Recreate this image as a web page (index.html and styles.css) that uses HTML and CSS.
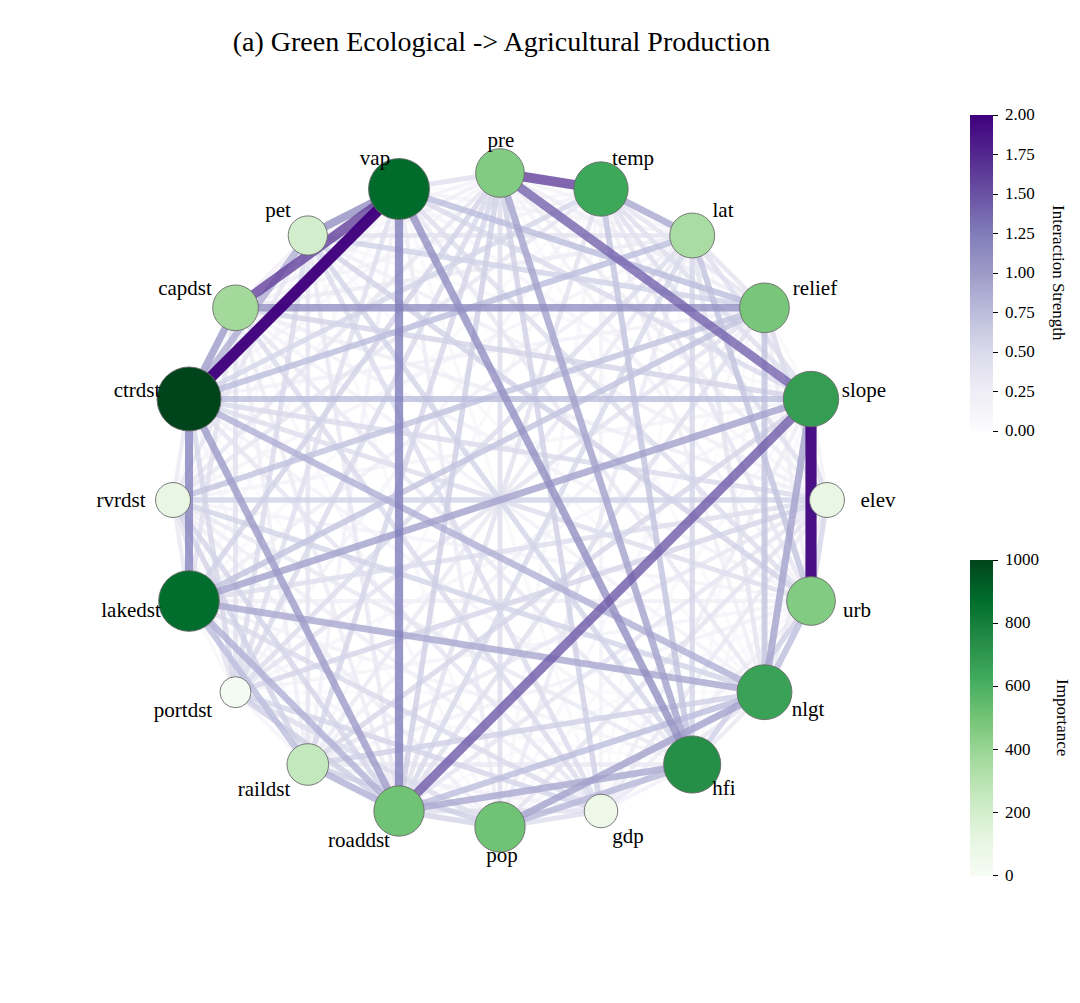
FILE: index.html
```html
<!DOCTYPE html>
<html lang="en">
<head>
<meta charset="utf-8">
<title>Green Ecological -> Agricultural Production</title>
<link rel="stylesheet" href="styles.css">
</head>
<body>
<div class="figure">
  <h1 class="title">(a) Green Ecological -&gt; Agricultural Production</h1>
  <div class="content">
    <svg id="graph" class="graph" width="940" height="945" viewBox="0 58 940 945" xmlns="http://www.w3.org/2000/svg">
      <g id="edges" class="edges"></g>
      <g id="nodes" class="nodes"></g>
      <g id="labels" class="labels"></g>
    </svg>
    <div class="cbars">
      <div class="cbar">
        <div class="bar purples"></div>
        <div class="ticks">
          <div class="tick">2.00</div>
          <div class="tick">1.75</div>
          <div class="tick">1.50</div>
          <div class="tick">1.25</div>
          <div class="tick">1.00</div>
          <div class="tick">0.75</div>
          <div class="tick">0.50</div>
          <div class="tick">0.25</div>
          <div class="tick">0.00</div>
        </div>
        <div class="cb-label">Interaction Strength</div>
      </div>
      <div class="cbar">
        <div class="bar greens"></div>
        <div class="ticks">
          <div class="tick">1000</div>
          <div class="tick">800</div>
          <div class="tick">600</div>
          <div class="tick">400</div>
          <div class="tick">200</div>
          <div class="tick">0</div>
        </div>
        <div class="cb-label">Importance</div>
      </div>
    </div>
  </div>
</div>
<script src="script.js"></script>
</body>
</html>
```

FILE: styles.css
```css
html, body {
  margin: 0;
  padding: 0;
  background: #ffffff;
}

.figure {
  width: 1080px;
  height: 1003px;
  background: #ffffff;
  font-family: "Liberation Serif", "Times New Roman", serif;
  color: #000000;
  overflow: hidden;
}

.title {
  margin: 0;
  width: 1003px;
  padding-top: 25px;
  height: 33px;
  line-height: 34px;
  font-size: 28px;
  font-weight: normal;
  text-align: center;
}

.content {
  display: flex;
}

.graph {
  display: block;
  flex: none;
}

.node-label {
  font-family: "Liberation Serif", "Times New Roman", serif;
  font-size: 21px;
  fill: #000000;
}

.node-circle {
  stroke: #6b6b6b;
  stroke-width: 0.9;
}

.edge {
  stroke-linecap: butt;
}

.cbars {
  display: flex;
  flex-direction: column;
  padding-top: 47px;
  gap: 109px;
}

.cbar {
  display: flex;
  align-items: center;
}

.bar {
  flex: none;
  width: 23px;
  height: 316px;
  margin-left: 30px;
}

.purples {
  background: linear-gradient(to top, #fcfbfd 0%, #efedf5 12.5%, #dadaeb 25%, #bcbddc 37.5%, #9e9ac8 50%, #807dba 62.5%, #6a51a3 75%, #54278f 87.5%, #3f007d 100%);
}

.greens {
  background: linear-gradient(to top, #f7fcf5 0%, #e5f5e0 12.5%, #c7e9c0 25%, #a1d99b 37.5%, #74c476 50%, #41ab5d 62.5%, #238b45 75%, #006d2c 87.5%, #00441b 100%);
}

.ticks {
  display: flex;
  flex-direction: column;
  justify-content: space-between;
  height: 336px;
  font-size: 17px;
}

.tick {
  display: flex;
  align-items: center;
  height: 20px;
  line-height: 20px;
}

.tick::before {
  content: "";
  width: 5px;
  height: 1px;
  background: #000000;
  margin-right: 7px;
}

.cb-label {
  writing-mode: vertical-rl;
  font-size: 17px;
  margin-left: 13px;
}
```

FILE: script.js
```js
(function () {
  var NS = "http://www.w3.org/2000/svg";
  var names = ["pre","temp","lat","relief","slope","elev","urb","nlgt","hfi","gdp","pop","roaddst","raildst","portdst","lakedst","rvrdst","ctrdst","capdst","pet","vap"];
  var imp = [0.46,0.64,0.35,0.49,0.68,0.10,0.46,0.66,0.74,0.07,0.51,0.51,0.26,0.02,0.87,0.10,1.00,0.37,0.20,0.88];
  var labels = [[501,147],[633,165],[723,217],[815,295],[864,397],[878,507],[857,617],[808,716],[724,795],[628,843],[502,862],[359,847],[264,796],[183,717],[131,617],[121,507],[137,397],[185,295],[278,217],[375,165]];
  var cx = 500, cy = 500, R = 327;

  var purples = ["#fcfbfd","#efedf5","#dadaeb","#bcbddc","#9e9ac8","#807dba","#6a51a3","#54278f","#3f007d"];
  var greens = ["#f7fcf5","#e5f5e0","#c7e9c0","#a1d99b","#74c476","#41ab5d","#238b45","#006d2c","#00441b"];

  function hex(h) { return [parseInt(h.substr(1,2),16), parseInt(h.substr(3,2),16), parseInt(h.substr(5,2),16)]; }
  function cmap(stops, t) {
    t = Math.max(0, Math.min(1, t));
    var p = t * (stops.length - 1);
    var i = Math.min(Math.floor(p), stops.length - 2);
    var f = p - i;
    var a = hex(stops[i]), b = hex(stops[i + 1]);
    var c = [0,1,2].map(function (k) { return Math.round(a[k] + (b[k] - a[k]) * f); });
    return "rgb(" + c.join(",") + ")";
  }

  var pos = names.map(function (n, i) {
    var ang = i * 18 * Math.PI / 180;
    return [cx + R * Math.sin(ang), cy - R * Math.cos(ang)];
  });

  var seed = 12345;
  function rnd() {
    seed |= 0; seed = seed + 0x6D2B79F5 | 0;
    var t = Math.imul(seed ^ seed >>> 15, 1 | seed);
    t = t + Math.imul(t ^ t >>> 7, 61 | t) ^ t;
    return ((t ^ t >>> 14) >>> 0) / 4294967296;
  }

  var W = {};
  function key(a, b) { return a < b ? a + "-" + b : b + "-" + a; }
  for (var i = 0; i < 20; i++) {
    for (var j = i + 1; j < 20; j++) {
      var r = rnd();
      W[key(i, j)] = 0.04 + 0.55 * Math.pow(r, 1.3);
    }
  }
  var strong = [
    [19,16,2.0],[4,6,1.95],[19,17,1.6],[0,1,1.6],[0,4,1.4],[11,4,1.45],
    [19,11,1.25],[16,14,1.2],[17,3,1.1],[19,18,1.1],[17,16,1.0],[18,16,0.85],
    [16,4,0.75],[1,2,0.9],[19,8,1.1],[0,8,0.95],[16,11,1.0],[16,7,0.85],
    [14,7,0.9],[14,4,0.95],[14,3,0.7],[2,16,0.75],[4,7,0.95],[10,7,0.95],
    [11,8,0.9],[11,7,0.75],[10,8,0.8],[12,11,0.85],[14,11,0.85],[14,12,0.75],
    [6,7,0.75],[19,3,0.75],[15,3,0.7],[2,6,0.7],[3,7,0.7],[1,8,0.7],
    [0,11,0.6],[13,11,0.6],[12,10,0.6]
  ];
  strong.forEach(function (s) { W[key(s[0], s[1])] = s[2]; });

  var edges = Object.keys(W).map(function (k) {
    var p = k.split("-");
    return [parseInt(p[0], 10), parseInt(p[1], 10), W[k]];
  }).sort(function (a, b) { return a[2] - b[2]; });

  var ge = document.getElementById("edges");
  edges.forEach(function (e) {
    var a = pos[e[0]], b = pos[e[1]], s = e[2];
    var l = document.createElementNS(NS, "line");
    l.setAttribute("class", "edge");
    l.setAttribute("x1", a[0].toFixed(1));
    l.setAttribute("y1", a[1].toFixed(1));
    l.setAttribute("x2", b[0].toFixed(1));
    l.setAttribute("y2", b[1].toFixed(1));
    l.setAttribute("stroke", cmap(purples, s / 2));
    l.setAttribute("stroke-width", (3 + 4.2 * s).toFixed(2));
    l.setAttribute("stroke-opacity", s > 1.8 ? "0.97" : "0.8");
    ge.appendChild(l);
  });

  var gn = document.getElementById("nodes");
  var gl = document.getElementById("labels");
  names.forEach(function (n, i) {
    var c = document.createElementNS(NS, "circle");
    c.setAttribute("class", "node-circle");
    c.setAttribute("cx", pos[i][0].toFixed(1));
    c.setAttribute("cy", pos[i][1].toFixed(1));
    c.setAttribute("r", Math.sqrt(225 + 800 * imp[i]).toFixed(2));
    c.setAttribute("fill", cmap(greens, imp[i]));
    gn.appendChild(c);

    var t = document.createElementNS(NS, "text");
    t.setAttribute("class", "node-label");
    t.setAttribute("x", labels[i][0]);
    t.setAttribute("y", labels[i][1]);
    t.setAttribute("text-anchor", "middle");
    t.textContent = n;
    gl.appendChild(t);
  });
})();
```
